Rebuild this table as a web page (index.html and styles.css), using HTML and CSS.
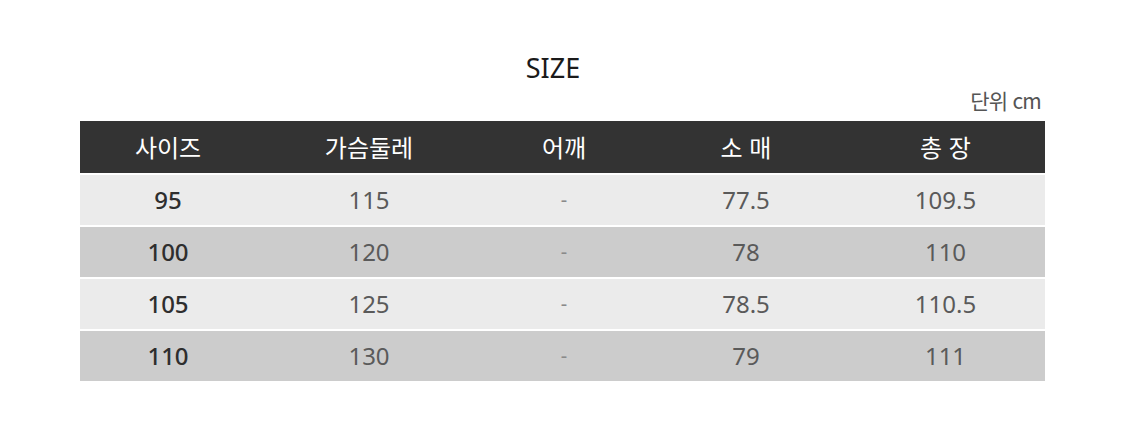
FILE: index.html
```html
<!DOCTYPE html>
<html lang="ko">
<head>
<meta charset="utf-8">
<link rel="stylesheet" href="styles.css">
</head>
<body>
<div class="page">
  <h1 class="title">SIZE</h1>
  <div class="unit">단위 cm</div>
  <div class="table">
    <div class="row head">
      <div class="cell">사이즈</div>
      <div class="cell">가슴둘레</div>
      <div class="cell">어깨</div>
      <div class="cell">소 매</div>
      <div class="cell">총 장</div>
    </div>
    <div class="row light">
      <div class="cell size">95</div>
      <div class="cell">115</div>
      <div class="cell dash">-</div>
      <div class="cell">77.5</div>
      <div class="cell">109.5</div>
    </div>
    <div class="row dark">
      <div class="cell size">100</div>
      <div class="cell">120</div>
      <div class="cell dash">-</div>
      <div class="cell">78</div>
      <div class="cell">110</div>
    </div>
    <div class="row light">
      <div class="cell size">105</div>
      <div class="cell">125</div>
      <div class="cell dash">-</div>
      <div class="cell">78.5</div>
      <div class="cell">110.5</div>
    </div>
    <div class="row dark">
      <div class="cell size">110</div>
      <div class="cell">130</div>
      <div class="cell dash">-</div>
      <div class="cell">79</div>
      <div class="cell">111</div>
    </div>
  </div>
</div>
</body>
</html>
```
FILE: styles.css
```css
html, body {
  margin: 0;
  padding: 0;
  background: #ffffff;
}
body {
  font-family: "Noto Sans CJK KR", "Noto Sans", sans-serif;
  width: 1125px;
  height: 425px;
  overflow: hidden;
}
.page {
  padding: 50px 80px 0 80px;
  display: flex;
  flex-direction: column;
}
.title {
  margin: 0;
  font-family: "Noto Sans", "Noto Sans CJK KR", sans-serif;
  font-weight: 400;
  font-size: 27px;
  line-height: 36px;
  color: #1a1a1a;
  text-align: center;
  padding-right: 19px;
}
.unit {
  text-align: right;
  font-size: 21px;
  line-height: 28px;
  color: #555555;
  padding-right: 4px;
  letter-spacing: -0.8px;
}
.table {
  margin-top: 7px;
  display: flex;
  flex-direction: column;
  gap: 2px;
}
.row {
  display: grid;
  grid-template-columns: 176px 226px 164px 200px 199px;
  height: 50px;
  align-items: center;
  text-align: center;
  font-family: "Noto Sans", "Noto Sans CJK KR", sans-serif;
  font-size: 24px;
  color: #5a5a5a;
}
.row.head {
  height: 52px;
  background: #333333;
  color: #ffffff;
  font-family: "Noto Sans CJK KR", "Noto Sans", sans-serif;
}
.row.light { background: #ebebeb; }
.row.dark { background: #cccccc; }
.cell {
  line-height: 30px;
  padding-bottom: 1px;
}
.cell.size {
  color: #2e2e2e;
  font-weight: 500;
}
.cell.dash {
  color: #8a8a8a;
  font-size: 20px;
}
```
